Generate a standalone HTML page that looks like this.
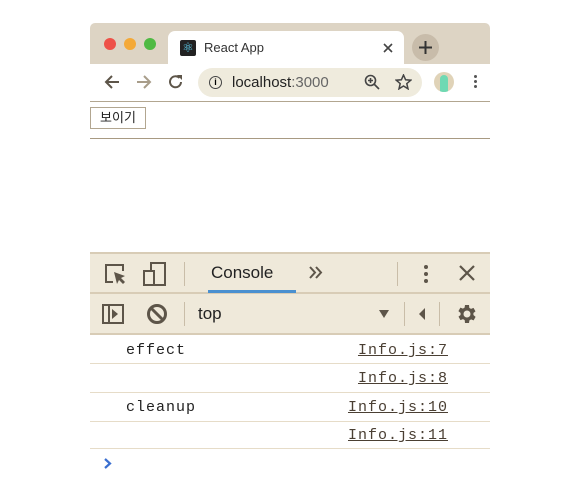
<!DOCTYPE html>
<html><head><meta charset="utf-8"><style>
body{margin:0;width:571px;height:483px;background:#fff;position:relative;font-family:"Liberation Sans","Noto Sans CJK KR",sans-serif;overflow:hidden}
.a{position:absolute}
.mono{font-family:"Liberation Mono",monospace;font-size:15px;color:#222;letter-spacing:1px}
.lnk{font-family:"Liberation Mono",monospace;font-size:15px;color:#4a3f33;text-decoration:underline;text-align:right;width:200px;letter-spacing:1px}
svg{position:absolute}
</style></head><body>
<div class="a" style="left:90px;top:23px;width:400px;height:41px;background:#ddd4c4;border-radius:5px 5px 0 0"></div>
<div class="a" style="left:104px;top:38px;width:12px;height:12px;border-radius:50%;background:#ee5148"></div>
<div class="a" style="left:124px;top:38px;width:12px;height:12px;border-radius:50%;background:#f4a937"></div>
<div class="a" style="left:144px;top:38px;width:12px;height:12px;border-radius:50%;background:#4fba43"></div>
<div class="a" style="left:168px;top:31px;width:236px;height:33px;background:#fff;border-radius:7px 7px 0 0"></div>
<div class="a" style="left:180px;top:40px;width:16px;height:16px;background:#222;border-radius:2px;color:#61dafb;font-size:13px;line-height:16px;text-align:center">⚛</div>
<div class="a" style="left:204px;top:40px;font-size:13px;color:#333">React App</div>
<svg style="left:383px;top:43px" width="10" height="10"><path d="M1 1L9 9M9 1L1 9" stroke="#444" stroke-width="1.6"/></svg>
<div class="a" style="left:412px;top:34px;width:27px;height:27px;border-radius:50%;background:#c8bcaa"></div>
<svg style="left:418px;top:40px" width="15" height="15"><path d="M7.5 1V14M1 7.5H14" stroke="#333" stroke-width="2"/></svg>
<div class="a" style="left:90px;top:64px;width:400px;height:37px;background:#fff"></div>
<svg style="left:104px;top:75px" width="16" height="14"><path d="M15 7H2M8 1L2 7L8 13" stroke="#5d5549" stroke-width="2" fill="none"/></svg>
<svg style="left:136px;top:75px" width="16" height="14"><path d="M1 7H14M8 1L14 7L8 13" stroke="#a89d8a" stroke-width="2" fill="none"/></svg>
<svg style="left:168px;top:74px" width="16" height="16"><path d="M13 8A5.5 5.5 0 1 1 11.5 4" stroke="#5d5549" stroke-width="2" fill="none"/><path d="M9 1H14V6Z" fill="#5d5549"/></svg>
<div class="a" style="left:198px;top:68px;width:224px;height:29px;border-radius:15px;background:#efebdd"></div>
<div class="a" style="left:209px;top:76px;width:11px;height:11px;border:1.5px solid #444;border-radius:50%;font-size:9px;text-align:center;line-height:11px;font-weight:bold">i</div>
<div class="a" style="left:232px;top:74px;font-size:15px;color:#222">localhost<span style="color:#666">:3000</span></div>
<svg style="left:364px;top:74px" width="16" height="16"><circle cx="6.5" cy="6.5" r="5" stroke="#444" stroke-width="1.6" fill="none"/><path d="M10 10L15 15M6.5 4V9M4 6.5H9" stroke="#444" stroke-width="1.6"/></svg>
<svg style="left:395px;top:74px" width="17" height="16"><path d="M8.5 1L10.6 5.8L15.8 6.2L11.8 9.6L13 14.8L8.5 12L4 14.8L5.2 9.6L1.2 6.2L6.4 5.8Z" stroke="#444" stroke-width="1.5" fill="none"/></svg>
<div class="a" style="left:434px;top:72px;width:20px;height:20px;border-radius:50%;background:#e0d3b8;overflow:hidden"><div class="a" style="left:6px;top:3px;width:8px;height:17px;border-radius:4px 4px 0 0;background:#6fd9b3"></div></div>
<div class="a" style="left:474px;top:75px;width:3px;height:3px;background:#555;border-radius:50%;box-shadow:0 5px #555,0 10px #555"></div>
<div class="a" style="left:90px;top:101px;width:400px;height:1px;background:#b2a690"></div>
<div class="a" style="left:90px;top:107px;width:54px;height:20px;border:1px solid #b2a690;font-size:13px;line-height:20px;text-align:center;color:#222">보이기</div>
<div class="a" style="left:90px;top:138px;width:400px;height:1px;background:#a89a82"></div>
<!-- devtools -->
<div class="a" style="left:90px;top:252px;width:400px;height:81px;background:#efe9da;border-top:2px solid #d8ccb6"></div>
<div class="a" style="left:90px;top:292px;width:400px;height:2px;background:#d8ccb6"></div>
<div class="a" style="left:208px;top:290px;width:88px;height:3px;background:#4a90d0"></div>
<svg style="left:104px;top:262px" width="24" height="24"><path d="M9 20H2V3H19V9" stroke="#5d5549" stroke-width="2" fill="none"/><path d="M10 10L21 14L17 16L21 20L19 22L15 18L13 22Z" fill="#5d5549"/></svg>
<svg style="left:142px;top:261px" width="26" height="26"><rect x="9" y="2" width="14" height="22" stroke="#5d5549" stroke-width="2" fill="none"/><rect x="2" y="10" width="10" height="14" stroke="#5d5549" stroke-width="2" fill="#efe9da"/></svg>
<div class="a" style="left:184px;top:262px;width:1px;height:24px;background:#c9bda8"></div>
<div class="a" style="left:211px;top:263px;font-size:17px;color:#222">Console</div>
<svg style="left:309px;top:266px" width="14" height="13"><path d="M1 1L6 6.5L1 12M7 1L12 6.5L7 12" stroke="#5d5549" stroke-width="2" fill="none"/></svg>
<div class="a" style="left:397px;top:262px;width:1px;height:24px;background:#c9bda8"></div>
<div class="a" style="left:424px;top:265px;width:4px;height:4px;background:#5d5549;border-radius:50%;box-shadow:0 7px #5d5549,0 14px #5d5549"></div>
<svg style="left:459px;top:265px" width="16" height="16"><path d="M1 1L15 15M15 1L1 15" stroke="#5d5549" stroke-width="2.2"/></svg>
<svg style="left:102px;top:304px" width="22" height="20"><rect x="1" y="1" width="20" height="18" stroke="#5d5549" stroke-width="2" fill="none"/><path d="M7 1V19" stroke="#5d5549" stroke-width="2"/><path d="M10 5L16 10L10 15Z" fill="#5d5549"/></svg>
<svg style="left:146px;top:303px" width="22" height="22"><circle cx="11" cy="11" r="8.5" stroke="#5d5549" stroke-width="3" fill="none"/><path d="M5 5L17 17" stroke="#5d5549" stroke-width="3"/></svg>
<div class="a" style="left:184px;top:302px;width:1px;height:24px;background:#c9bda8"></div>
<div class="a" style="left:198px;top:304px;font-size:17px;color:#222">top</div>
<svg style="left:378px;top:309px" width="12" height="10"><path d="M1 1H11L6 9Z" fill="#5d5549"/></svg>
<div class="a" style="left:404px;top:302px;width:1px;height:24px;background:#c9bda8"></div>
<svg style="left:419px;top:308px" width="7" height="12"><path d="M6 0V12L0 6Z" fill="#5d5549"/></svg>
<div class="a" style="left:439px;top:302px;width:1px;height:24px;background:#c9bda8"></div>
<svg style="left:455px;top:302px" width="24" height="24" viewBox="0 0 24 24"><path fill="#5d5549" d="M19.4 13a7.5 7.5 0 0 0 0-2l2.1-1.6-2-3.5-2.5 1a7 7 0 0 0-1.7-1L15 3h-4l-.4 2.6a7 7 0 0 0-1.7 1l-2.5-1-2 3.5L6.6 11a7.5 7.5 0 0 0 0 2l-2.1 1.6 2 3.5 2.5-1a7 7 0 0 0 1.7 1L11 21h4l.4-2.6a7 7 0 0 0 1.7-1l2.5 1 2-3.5zM13 15.5a3.5 3.5 0 1 1 0-7 3.5 3.5 0 0 1 0 7z" transform="translate(-1 0)"/></svg>
<div class="a" style="left:90px;top:333px;width:400px;height:2px;background:#d8ccb6"></div>
<div class="a mono" style="left:126px;top:342px">effect</div>
<div class="a lnk" style="left:248px;top:342px">Info.js:7</div>
<div class="a" style="left:90px;top:363px;width:400px;height:1px;background:#e6dcc8"></div>
<div class="a lnk" style="left:248px;top:370px">Info.js:8</div>
<div class="a" style="left:90px;top:392px;width:400px;height:1px;background:#e6dcc8"></div>
<div class="a mono" style="left:126px;top:399px">cleanup</div>
<div class="a lnk" style="left:248px;top:399px">Info.js:10</div>
<div class="a" style="left:90px;top:421px;width:400px;height:1px;background:#e6dcc8"></div>
<div class="a lnk" style="left:248px;top:427px">Info.js:11</div>
<div class="a" style="left:90px;top:448px;width:400px;height:1px;background:#e6dcc8"></div>
<svg style="left:104px;top:458px" width="8" height="11"><path d="M1 1L6 5.5L1 10" stroke="#3b6fd0" stroke-width="2.2" fill="none"/></svg>
</body></html>
